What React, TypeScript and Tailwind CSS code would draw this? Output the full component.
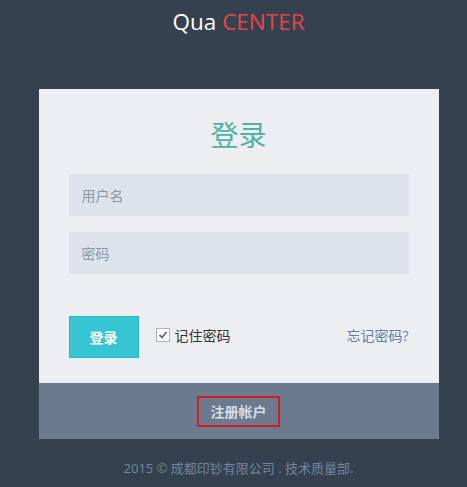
import { useState } from 'react';

export default function App() {
  const [remember, setRemember] = useState(true);

  return (
    <div
      className="min-h-[487px] w-full bg-[#364150] flex flex-col items-center pl-[10px]"
      style={{ fontFamily: '"Open Sans", "Noto Sans CJK SC", sans-serif' }}
    >
      {/* logo */}
      <div className="h-[89px] pt-[7px] text-[22.5px] leading-[30px]">
        <span className="text-white">Qua</span>{' '}
        <span className="text-[#e7444a]">CENTER</span>
      </div>

      {/* login card */}
      <div className="w-[400px] bg-[#eceef1]">
        <div className="px-[30px] pt-[28px] pb-[25px]">
          <h3 className="text-center text-[28px] leading-[36px] text-[#4db3a4] mb-[21px]">登录</h3>
          <input
            type="text"
            placeholder="用户名"
            className="block w-full h-[42px] bg-[#dde3ec] px-[13px] text-[14px] text-[#333] placeholder:text-[#8e96a3] outline-none"
          />
          <input
            type="password"
            placeholder="密码"
            className="block w-full h-[42px] mt-[16px] bg-[#dde3ec] px-[13px] text-[14px] text-[#333] placeholder:text-[#8e96a3] outline-none"
          />
          <div className="flex items-center mt-[42px]">
            <button className="w-[70px] h-[42px] bg-[#36c6d3] border border-[#2bb8c4] text-white text-[14px] font-bold">
              登录
            </button>
            <label className="flex items-center ml-[17px] mb-[4px] text-[14px] text-[#333] cursor-pointer">
              <span
                onClick={() => setRemember(!remember)}
                className="w-[14px] h-[14px] border border-[#b3b3b3] bg-white flex items-center justify-center mr-[5px]"
              >
                {remember && (
                  <svg width="10" height="10" viewBox="0 0 10 10">
                    <path d="M1.5 5 L4 7.5 L8.5 2" fill="none" stroke="#6b6b6b" strokeWidth="1.8" />
                  </svg>
                )}
              </span>
              记住密码
            </label>
            <a href="#" className="ml-auto mb-[4px] text-[14px] text-[#5b7fa8]">忘记密码?</a>
          </div>
        </div>
        <div className="h-[56px] bg-[#6b7a8c] flex items-center justify-center">
          <a href="#" className="w-[83px] h-[31px] border-2 border-[#d11c24] flex items-center justify-center text-[14px] font-bold text-[#d5dde7]">
            注册帐户
          </a>
        </div>
      </div>

      <div className="mt-[20px] text-[13px] text-[#6f85a1]">2015 © 成都印钞有限公司 . 技术质量部.</div>
    </div>
  );
}
